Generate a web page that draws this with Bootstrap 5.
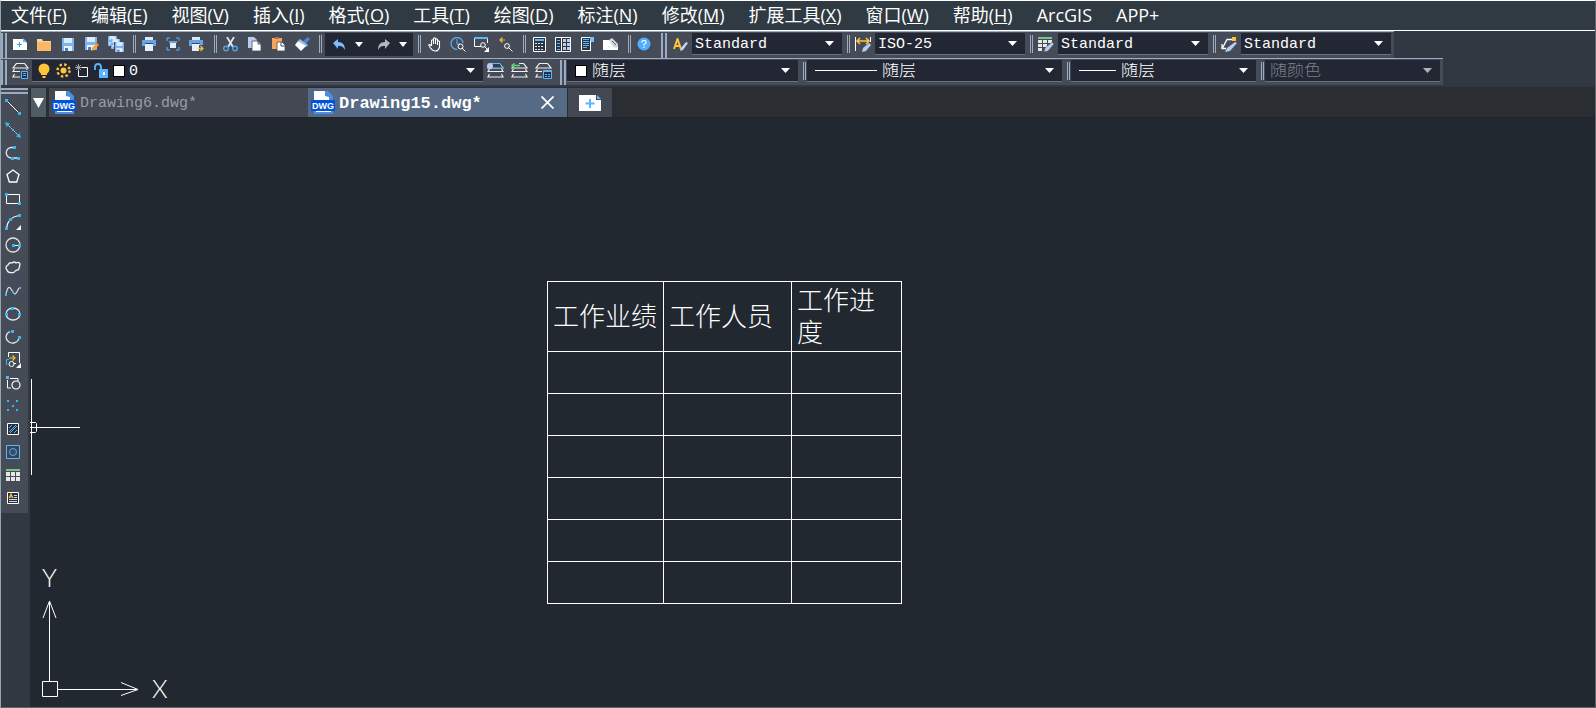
<!DOCTYPE html>
<html lang="zh-CN">
<head>
<meta charset="utf-8">
<meta name="viewport" content="width=device-width, initial-scale=1">
<title>Drawing15.dwg</title>
<link rel="stylesheet" href="https://cdn.jsdelivr.net/npm/bootstrap@5.3.0/dist/css/bootstrap.min.css">
<style>
  :root { --panel:#323842; --bar:#454c57; --well:#222733; --line:#9aabc2; --canvas:#222830; --cyan:#31b8f5; --blue:#5bb5ff; --gold:#ffc43a; }
  body { background:var(--canvas); color:#fff; font-family:"Open Sans","Noto Sans CJK SC",sans-serif; overflow:hidden; }
  .app-frame { border:1px solid #5c646c; border-left-color:#93a5ad; border-top-color:#fff; }
  .menu-bar { background:#2f3a42; border-bottom:1px solid #fff; height:30px; padding-left:10px; gap:24px; }
  .menu-bar .nav-link { color:#fff; padding:0; font-size:18px; line-height:29px; white-space:nowrap; }
  .dock { background:var(--panel); height:56px; }
  .tool-strip { background:var(--bar); border-top:1px solid var(--line); height:27px; padding:1px 3px 0 0; width:max-content; }
  .grip { width:6px; height:25px; border:solid var(--line); border-width:0 2px; margin-right:1px; flex:none; }
  .grip-mid { margin-left:5px; }
  .split { width:3px; height:18px; border:solid var(--line); border-width:0 1px; margin:2px 1px 0 5px; flex:none; }
  .tool { width:24px; height:22px; padding:0; border:0; display:flex; align-items:center; justify-content:center; flex:none; border-radius:0; }
  .tool svg, .well svg, .side svg { display:block; flex:none; }
  .tool-narrow { width:16px; }
  .well { background:var(--well); height:22px; border-bottom:1px solid #6c7380; flex:none; }
  .undo-well { background:var(--well); height:23px; padding:0 2px; margin-left:2px; }
  .well select { appearance:none; background:transparent url("data:image/svg+xml,%3Csvg xmlns='http://www.w3.org/2000/svg' width='9' height='5'%3E%3Cpath d='M0 0h9L4.500 5z' fill='%23fff'/%3E%3C/svg%3E") no-repeat right 8px center; border:0; color:#fff; height:21px; line-height:18px; padding:3px 24px 0 3px; font-family:"Liberation Mono","Noto Sans CJK SC",monospace; font-size:15px; outline:0; min-width:0; }
  .well select.han { font-size:17px; font-weight:300; padding-left:5px; }
  .well select:disabled { color:#7b818a; opacity:1; background-image:url("data:image/svg+xml,%3Csvg xmlns='http://www.w3.org/2000/svg' width='9' height='5'%3E%3Cpath d='M0 0h9L4.500 5z' fill='%23b0b4b8'/%3E%3C/svg%3E"); }
  .w-style { width:150px; } .w-layer { width:451px; padding-left:2px; } .w-color { width:231px; } .w-ltype { width:255px; } .w-weight { width:185px; } .w-plot { width:175px; }
  .swatch { width:12px; height:12px; background:#fff; border:1px solid #000; flex:none; }
  .rule-line { height:1px; background:#fff; flex:none; }
  .side-dock { background:var(--panel); width:29px; }
  .side { background:var(--bar); width:27px; margin-top:1px; padding-bottom:4px; }
  .side-grip { height:6px; border:solid var(--line); border-width:2px 0; margin-bottom:1px; }
  .side .tool { height:23px; width:24px; }
  .tab-strip { background:#2a2d31; height:31px; padding-top:1px; border-bottom:1px solid #20252b; }
  .doc-tab { background:#434852; color:#9a9da2; width:259px; height:29px; padding:0 9px 0 3px; font-family:"Liberation Mono",monospace; font-size:15px; line-height:26px; }
  .doc-tab.active { background:#566985; color:#fff; font-weight:700; font-size:17px; }
  .doc-name { padding-top:3px !important; }
  .plain { background:none; border:0; color:inherit; padding:0; font:inherit; display:flex; align-items:center; }
  .tab-list { background:#505c63; width:15px; height:29px; justify-content:center; margin:0 3px 0 1px; }
  .tab-new { background:#434852; width:44px; height:29px; justify-content:center; margin-left:1px; }
  .drawing { background:var(--canvas); }
  .sheet-table { position:absolute; left:517px; top:163px; width:355px; border-collapse:collapse; table-layout:fixed; font-family:"Noto Sans CJK SC",sans-serif; }
  .sheet-table th, .sheet-table td { border:1px solid #fff; height:42px; padding:0 4px 4px 5px; font-size:26px; line-height:32px; font-weight:300; color:#fff; }
  .sheet-table th { height:70px; }
  .c-a { width:116px; } .c-b { width:128px; }
  .crosshair { position:absolute; left:0; top:261px; }
  .ucs { position:absolute; left:10px; bottom:0; }
  .ucs text { font-family:Lato,sans-serif; font-weight:300; font-size:25px; fill:#fff; }
  .dwg-text { font-family:"Liberation Sans",sans-serif; font-weight:700; font-size:9px; fill:#fff; }
</style>
</head>
<body>
<svg width="0" height="0" class="position-absolute" aria-hidden="true">
  <symbol id="caret" viewBox="0 0 8 5"><path d="M0 0h8L4 5z" fill="#fff"/></symbol>
  <symbol id="floppy" viewBox="0 0 12 13"><path d="M0 0h12v13H0z" fill="#7db4ee"/><path d="M2 0h8v5H2z" fill="#dcecff"/><path d="M2 8h8v5H2z" fill="#e8f2ff"/><path d="M3 10h3v3H3z" fill="#4a7fc0"/></symbol>
  <symbol id="printer" viewBox="0 0 14 14"><path d="M3 0h8v3H3z" fill="#d9e8fa"/><path d="M0 3h14v6H0z" fill="#64a5ea"/><path d="M3 6h8v8H3z" fill="#e6f0fc"/><path d="M3 6h8v1H3z" fill="#3b4858"/></symbol>
  <symbol id="layers" viewBox="0 0 17 16"><path d="M4.500.5h8l3.500 4.500H1zM2.500 6L1 8.500h15L14.500 6M2.500 11L1 14h15l-1.500-3" fill="none" stroke="#f0f0f0" stroke-width="1.200"/></symbol>
  <symbol id="dwg" viewBox="0 0 24 25"><path d="M3 1h13l5 5v18H3z" fill="#fff"/><path d="M14 1h3l5 5v5h-4V7l-4-1z" fill="#4d8ee0"/><path d="M3 20h19v4H3z" fill="#4d8ee0"/><path d="M5 21h15v1H5z" fill="#fff"/><path d="M0 10h24v11H0z" fill="#0054dc"/></symbol>
</svg>

<div class="app-frame d-flex flex-column vh-100">
  <nav class="menu-bar d-flex" aria-label="菜单">
    <a class="nav-link" href="#">文件(<u>F</u>)</a><a class="nav-link" href="#">编辑(<u>E</u>)</a><a class="nav-link" href="#">视图(<u>V</u>)</a><a class="nav-link" href="#">插入(<u>I</u>)</a><a class="nav-link" href="#">格式(<u>O</u>)</a><a class="nav-link" href="#">工具(<u>T</u>)</a><a class="nav-link" href="#">绘图(<u>D</u>)</a><a class="nav-link" href="#">标注(<u>N</u>)</a><a class="nav-link" href="#">修改(<u>M</u>)</a><a class="nav-link" href="#">扩展工具(<u>X</u>)</a><a class="nav-link" href="#">窗口(<u>W</u>)</a><a class="nav-link" href="#">帮助(<u>H</u>)</a><a class="nav-link" href="#">ArcGIS</a><a class="nav-link" href="#">APP+</a>
  </nav>

  <div class="dock">
    <div class="tool-strip d-flex align-items-start">
      <span class="grip"></span>
      <button class="btn tool" aria-label="新建"><svg width="14" height="12"><path d="M0 1h10l4 4v7H0z" fill="#fff"/><path d="M10 0l4 4h-4z" fill="#6db7f5"/><path d="M6.500 4v5M4 6.500h5" stroke="#3a9cf0"/></svg></button>
      <button class="btn tool" aria-label="打开"><svg width="14" height="13"><path d="M0 1h5l1 2h8v10H0z" fill="#f0d9a0"/><path d="M0 4h14v9H0z" fill="#fdb766"/></svg></button>
      <button class="btn tool" aria-label="保存"><svg width="12" height="13"><use href="#floppy"/></svg></button>
      <button class="btn tool" aria-label="另存为"><svg width="14" height="15"><use href="#floppy" width="12" height="13"/><path d="M6 14l1-3 5-5 2 2-5 5z" fill="#f6a623"/><path d="M11 6l1-1 2 2-1 1z" fill="#e24b3b"/></svg></button>
      <button class="btn tool" aria-label="全部保存"><svg width="16" height="16"><use href="#floppy" width="9" height="10"/><path d="M3 3h10v10H3z" fill="#454c57"/><use href="#floppy" x="3" y="3" width="9" height="10"/><path d="M6 6h10v10H6z" fill="#454c57"/><use href="#floppy" x="7" y="6" width="9" height="10"/></svg></button>
      <span class="split"></span>
      <button class="btn tool" aria-label="打印"><svg width="14" height="14"><use href="#printer"/></svg></button>
      <button class="btn tool" aria-label="打印预览"><svg width="14" height="14"><path d="M1 4V1h3M10 1h3v3M1 10v3h3M10 13h3v-3" fill="none" stroke="#5bb5ff"/><path d="M3 4h8v2H3z" fill="#64a5ea"/><path d="M4 6h6v5H4z" fill="#e6f0fc"/></svg></button>
      <button class="btn tool" aria-label="输出"><svg width="16" height="15"><use href="#printer" width="14" height="14"/><path d="M10 8h6v7h-6z" fill="#454c57"/><path d="M9 11.500h5M11.500 9l2.500 2.500-2.500 2.500" fill="none" stroke="#f3bd3c" stroke-width="1.300"/></svg></button>
      <span class="split"></span>
      <button class="btn tool" aria-label="剪切"><svg width="15" height="15"><path d="M4 0l6 10M11 0L5 10" stroke="#dfe9f3" stroke-width="1.800"/><circle cx="3" cy="11.500" r="2.300" fill="none" stroke="#4da6e8" stroke-width="1.400"/><circle cx="12" cy="11.500" r="2.300" fill="none" stroke="#4da6e8" stroke-width="1.400"/></svg></button>
      <button class="btn tool" aria-label="复制"><svg width="13" height="14"><path d="M0 0h6l3 3v8H0z" fill="#b9cdea"/><path d="M4 4h6l3 3v7H4z" fill="#fff" stroke="#454c57" stroke-width=".8"/><path d="M10 4v3h3" fill="none" stroke="#454c57"/></svg></button>
      <button class="btn tool" aria-label="粘贴"><svg width="13" height="14"><path d="M0 1h10v11H0z" fill="#f5a65b"/><path d="M3 0h4v2H3z" fill="#c9683a"/><path d="M5 5h5l3 3v6H5z" fill="#fff" stroke="#454c57" stroke-width=".8"/><path d="M9 5v4h4" fill="none" stroke="#454c57"/></svg></button>
      <button class="btn tool" aria-label="特性匹配"><svg width="15" height="14"><path d="M8 4l5-4 2 2-4 5z" fill="#4e86c8"/><path d="M5 2l8 6-2 2-8-6z" fill="#8fbcf2"/><path d="M3 4l8 5-5 5-6-6z" fill="#fff"/></svg></button>
      <span class="split"></span>
      <div class="undo-well d-flex">
        <button class="btn tool" aria-label="放弃"><svg width="13" height="11"><path d="M0 4l5-4v3c5 0 7 3 7 8-2-4-4-4-7-4v3z" fill="#7dbcff"/></svg></button>
        <button class="btn tool tool-narrow me-1" aria-label="放弃列表"><svg width="8" height="5"><use href="#caret"/></svg></button>
        <button class="btn tool" aria-label="重做"><svg width="13" height="11"><path d="M13 4L8 0v3C3 3 1 6 1 11c2-4 4-4 7-4v3z" fill="#b5b7ba"/></svg></button>
        <button class="btn tool tool-narrow" aria-label="重做列表"><svg width="8" height="5"><use href="#caret"/></svg></button>
      </div>
      <span class="split"></span>
      <button class="btn tool" aria-label="平移"><svg width="13" height="15"><path d="M3.500 9V3.500q1-1.500 2 0V7 1.500q1-1.500 2 0V7 2.500q1-1.500 2 0V8 4.500q1-1.500 2 0V10q-1 4-4 4t-5-3L.7 8q.8-1.500 2.800 1" fill="none" stroke="#fff" stroke-width="1.100"/></svg></button>
      <button class="btn tool" aria-label="实时缩放"><svg width="16" height="15"><path d="M7 12.500A6 6 0 1 1 13 6" fill="none" stroke="#55a8e8" stroke-width="1.400"/><path d="M7 2v5h3" fill="none" stroke="#5bb5ff"/><circle cx="10.500" cy="9.500" r="2.500" fill="none" stroke="#fff"/><path d="M12 11l3.500 3.500" stroke="#fff"/></svg></button>
      <button class="btn tool" aria-label="窗口缩放"><svg width="16" height="15"><path d="M7 9.500H.5V1h13v5" fill="none" stroke="#fff"/><path d="M0 0h14v2H0z" fill="#5bb5ff"/><circle cx="9" cy="8" r="2.300" fill="none" stroke="#fff"/><path d="M10.500 9.500L14 13" stroke="#fff"/><path d="M15 10v5h-5z" fill="#fff"/></svg></button>
      <button class="btn tool" aria-label="缩放上一个"><svg width="14" height="15"><path d="M6 3H1M3.500.5L1 3l2.500 2.500" fill="none" stroke="#f3bd3c" stroke-width="1.200"/><circle cx="8" cy="9" r="2.400" fill="none" stroke="#fff"/><path d="M9.500 10.500L13.500 14.500" stroke="#fff"/></svg></button>
      <span class="split"></span>
      <button class="btn tool" aria-label="特性"><svg width="13" height="15"><path d="M.5.500h12v14H.5z" fill="#2c3440" stroke="#fff"/><path d="M2 2h9v2H2z" fill="#5bb5ff"/><path d="M2 6.500h9M2 9.500h9M2 12.500h9" stroke="#dfe9f3" stroke-dasharray="2 1"/></svg></button>
      <button class="btn tool" aria-label="设计中心"><svg width="16" height="15"><path d="M.5.500h15v14H.5zM6.500 0v15" fill="#2c3440" stroke="#fff"/><path d="M2 3.500h3M2 6.500h3M2 9.500h3M2 12.500h3" stroke="#5bb5ff"/><path d="M8 2h3v3H8zM12 2h3v3h-3zM8 6h3v3H8zM12 6h3v3h-3zM8 10h3v3H8zM12 10h3v3h-3z" fill="#b9cdea"/></svg></button>
      <button class="btn tool" aria-label="工具选项板"><svg width="13" height="14"><path d="M.5.500h9v13H.5z" fill="#2c3440" stroke="#fff"/><path d="M9 0h4v5H9z" fill="#7dbcff"/><path d="M9.500 4v10" stroke="#fff"/><path d="M2 2.500h6M2 4.500h6M2 6.500h6M2 8.500h6M2 10.500h4" stroke="#5bb5ff"/></svg></button>
      <button class="btn tool" aria-label="清理"><svg width="16" height="13"><path d="M0 2h8l7 6v4H0z" fill="#fff"/><path d="M6 2l3-2 6 6-1 4-4-1z" fill="#d2d8df"/><path d="M9 3l4 4" stroke="#59616c"/></svg></button>
      <span class="split"></span>
      <button class="btn tool" aria-label="帮助"><svg width="14" height="14"><circle cx="7" cy="7" r="6.500" fill="#4faeff"/><path d="M5 5.500q0-2 2-2t2 1.700Q9 6.500 7 7.500v1M7 9.500v1.500" fill="none" stroke="#fff" stroke-width="1.200"/></svg></button>

      <span class="grip grip-mid"></span>
      <button class="btn tool" aria-label="文字样式"><svg width="15" height="13"><path d="M1 11L4.500 1 8 11M2 8h5" fill="none" stroke="#ffc43a" stroke-width="2"/><path d="M7 13l1-3 5-6 2 1-5 7z" fill="#c3d7ef"/></svg></button>
      <div class="well w-style d-flex"><select class="flex-fill" aria-label="文字样式"><option>Standard</option></select></div>
      <span class="split"></span>
      <button class="btn tool" aria-label="标注样式"><svg width="16" height="15"><path d="M.5 0v14M15.500 0v5" stroke="#fff"/><path d="M2 4h12M5 1L2 4l3 3M11 1l3 3-3 3" fill="none" stroke="#ffc43a" stroke-width="1.500"/><path d="M7 15l1-4 6-5 2 2-5 6z" fill="#b4cdec"/></svg></button>
      <div class="well w-style d-flex"><select class="flex-fill" aria-label="标注样式"><option>ISO-25</option></select></div>
      <span class="split"></span>
      <button class="btn tool" aria-label="表格样式"><svg width="16" height="15"><path d="M0 0h14v2H0z" fill="#7bc48c"/><path d="M0 3h4v3H0zM5 3h4v3H5zM10 3h4v3h-4zM0 7h4v3H0zM5 7h4v3H5zM0 11h4v3H0z" fill="#e8e8e8"/><path d="M6 15l1-4 7-6 2 2-6 7z" fill="#b4cdec" stroke="#454c57" stroke-width=".5"/></svg></button>
      <div class="well w-style d-flex"><select class="flex-fill" aria-label="表格样式"><option>Standard</option></select></div>
      <span class="split"></span>
      <button class="btn tool" aria-label="多重引线样式"><svg width="16" height="15"><path d="M11 2.500H6L1.500 11M1 7v4.500h4" fill="none" stroke="#fff" stroke-width="1.300"/><path d="M11 0h4v4h-4z" fill="#ffc43a"/><path d="M4 15l2-4 8-6 2 1-7 8z" fill="#b4cdec"/></svg></button>
      <div class="well w-style d-flex"><select class="flex-fill" aria-label="多重引线样式"><option>Standard</option></select></div>
    </div>

    <div class="tool-strip d-flex align-items-start">
      <span class="grip"></span>
      <button class="btn tool" aria-label="图层特性"><svg width="17" height="17"><use href="#layers" width="17" height="16"/><path d="M8 7h9v10H8z" fill="#454c57"/><path d="M9.500 8.500h6v7h-6z" fill="#25303f" stroke="#5bb5ff"/><path d="M11 10.500h3M11 12.500h3" stroke="#5bb5ff"/></svg></button>
      <div class="well w-layer d-flex align-items-center">
        <svg width="14" height="15" class="ms-1"><circle cx="6" cy="6" r="5.500" fill="#ffc43a"/><path d="M3 9h6v3H3zM4.500 13h3v2h-3z" fill="#ffc43a"/></svg>
        <svg width="15" height="15" class="ms-1"><circle cx="7.500" cy="7.500" r="3" fill="#ffc43a"/><circle cx="7.500" cy="7.500" r="6" fill="none" stroke="#ffc43a" stroke-width="2.400" stroke-dasharray="2.400 2.310"/></svg>
        <svg width="15" height="14" class="ms-1"><path d="M3.500 6v6.500h9v-9H7" fill="none" stroke="#fff"/><path d="M3.500 0v7M0 3.500h7M1 1l5 5M6 1L1 6" stroke="#b8bcc2" stroke-width=".8"/></svg>
        <svg width="15" height="15" class="ms-1"><path d="M1 7V3.500Q1.500 1 4 1t3 2.500V7" fill="none" stroke="#5bb5ff" stroke-width="1.800"/><path d="M5 6h9v9H5z" fill="#5bb5ff"/><path d="M9 9h2v3H9z" fill="#fff"/></svg>
        <span class="swatch ms-1"></span>
        <select class="flex-fill ms-1 ps-0" aria-label="图层"><option>0</option></select>
      </div>
      <button class="btn tool" aria-label="置为当前图层"><svg width="17" height="16"><use href="#layers"/><path d="M4 .5h9l2.500 4.500H2z" fill="#2f3d4f" stroke="#5bb5ff"/><circle cx="3" cy="3" r="3" fill="#b9cdea"/></svg></button>
      <button class="btn tool" aria-label="上一个图层"><svg width="17" height="16"><use href="#layers"/><path d="M0 0h8v4H0z" fill="#454c57"/><path d="M9 2.500H1M3.500.5L1 2.500 3.500 5" fill="none" stroke="#5fd27a" stroke-width="1.500"/></svg></button>
      <button class="btn tool" aria-label="图层状态"><svg width="17" height="16"><use href="#layers"/><path d="M7 6h10v10H7z" fill="#454c57"/><path d="M8.500 7.500h8v8h-8z" fill="#25303f" stroke="#5bb5ff"/><path d="M8 7h9v2H8z" fill="#5bb5ff"/><path d="M10 11.500h2M13 11.500h2M10 13.500h2M13 13.500h2" stroke="#5bb5ff"/></svg></button>

      <span class="grip grip-mid"></span>
      <div class="well w-color d-flex align-items-center"><span class="swatch ms-2"></span><select class="han flex-fill" aria-label="颜色"><option>随层</option></select></div>
      <span class="split"></span>
      <div class="well w-ltype d-flex align-items-center"><span class="rule-line ms-2" style="width:62px"></span><select class="han flex-fill" aria-label="线型"><option>随层</option></select></div>
      <span class="split"></span>
      <div class="well w-weight d-flex align-items-center"><span class="rule-line ms-2" style="width:37px"></span><select class="han flex-fill" aria-label="线宽"><option>随层</option></select></div>
      <span class="split"></span>
      <div class="well w-plot d-flex align-items-center"><select class="han flex-fill" aria-label="打印样式" disabled><option>随颜色</option></select></div>
    </div>
  </div>

  <div class="d-flex flex-fill">
    <aside class="side-dock">
      <div class="side">
        <div class="side-grip"></div>
        <button class="btn tool" aria-label="直线"><svg width="16" height="16"><path d="M2 2l12 12" stroke="#fff"/><path d="M0 0h3v3H0zM13 13h3v3h-3z" fill="#31b8f5"/></svg></button>
        <button class="btn tool" aria-label="构造线"><svg width="16" height="16"><path d="M2 2l12 12" stroke="#dfe9f3" stroke-dasharray="2 1"/><path d="M0 0l5 1.500L1.500 5zM16 16l-5-1.500 3.500-3.500zM7 7h2v2H7z" fill="#31b8f5"/></svg></button>
        <button class="btn tool" aria-label="多段线"><svg width="16" height="14"><path d="M9 1.500H6.500a5 5 0 0 0 0 10.500H13" fill="none" stroke="#e4e8ec" stroke-width="1.300"/><path d="M8 0h3v3H8zM6 11h3v3H6zM12 11h3v3h-3z" fill="#31b8f5"/></svg></button>
        <button class="btn tool" aria-label="正多边形"><svg width="14" height="14"><path d="M7 1l6 4.500L10.700 13H3.300L1 5.500z" fill="none" stroke="#fff" stroke-width="1.300"/></svg></button>
        <button class="btn tool" aria-label="矩形"><svg width="16" height="12"><path d="M1.500 1.500h13v9h-13z" fill="none" stroke="#fff"/><path d="M0 0h3v3H0zM13 9h3v3h-3z" fill="#31b8f5"/></svg></button>
        <button class="btn tool" aria-label="圆弧"><svg width="16" height="16"><path d="M1.500 14Q3 3 14 1.500" fill="none" stroke="#fff" stroke-width="1.200"/><path d="M0 13h3v3H0zM4 4h3v3H4zM13 0h3v3h-3z" fill="#31b8f5"/><path d="M16 11v5h-5z" fill="#fff"/></svg></button>
        <button class="btn tool" aria-label="圆"><svg width="16" height="16"><circle cx="8" cy="8" r="7" fill="none" stroke="#dfe3e8" stroke-width="1.300"/><path d="M8 8.500h6" stroke="#fff"/><path d="M7 7h3v3H7zM13 7h3v3h-3z" fill="#31b8f5"/></svg></button>
        <button class="btn tool" aria-label="修订云线"><svg width="16" height="13"><path d="M2 9Q-.5 6 3 4q1-3 4-2 2-2 4 0 3-1.500 4 1-.5 2-.7 3.500-.3 3-3.500 3-2 3-5 2Q3 12 2 9z" fill="none" stroke="#f0f2f4" stroke-width="1.300"/></svg></button>
        <button class="btn tool" aria-label="样条曲线"><svg width="16" height="10"><path d="M1 8.500Q3-2 6 3t4 5 4-6" fill="none" stroke="#dfe3e8" stroke-width="1.200"/><path d="M0 7h2v3H0zM7 5h2v2H7zM14 1h2v2h-2z" fill="#31b8f5"/></svg></button>
        <button class="btn tool" aria-label="椭圆"><svg width="16" height="14"><ellipse cx="8" cy="7" rx="7" ry="6" fill="none" stroke="#e4e8ec" stroke-width="1.300"/><path d="M6 0h3v3H6zM0 6h3v3H0zM13 6h3v3h-3z" fill="#31b8f5"/></svg></button>
        <button class="btn tool" aria-label="椭圆弧"><svg width="16" height="14"><path d="M5 1.500A6.500 6 0 1 0 14 8" fill="none" stroke="#e4e8ec" stroke-width="1.300"/><path d="M6 0h3v3H6zM13 6h3v3h-3z" fill="#31b8f5"/></svg></button>
        <button class="btn tool" aria-label="插入块"><svg width="16" height="16"><path d="M3.500 5V.5h11V11" fill="none" stroke="#fff"/><path d="M4 6h6M7.500 3.500L10 6 7.500 8.500" fill="none" stroke="#f3bd3c" stroke-width="1.200"/><path d="M1.500 13V7.500H4" fill="none" stroke="#31b8f5"/><circle cx="6.500" cy="12" r="2.500" fill="none" stroke="#fff"/><path d="M9 11.500h2" stroke="#fff"/><path d="M16 11v5h-5z" fill="#fff"/></svg></button>
        <button class="btn tool" aria-label="创建块"><svg width="15" height="14"><path d="M4 2.500h8V5M1.500 4v8H5" fill="none" stroke="#fff"/><path d="M0 0h3v3H0z" fill="#5bb5ff"/><circle cx="10" cy="9" r="4" fill="#454c57" stroke="#fff" stroke-width="1.200"/></svg></button>
        <button class="btn tool" aria-label="点"><svg width="12" height="12"><path d="M0 0h2v2H0zM9 0h2v2H9zM5 5h2v2H5zM0 9h2v2H0zM9 9h2v2H9z" fill="#31b8f5"/></svg></button>
        <button class="btn tool" aria-label="图案填充"><svg width="12" height="12"><path d="M.5.500h11v11H.5z" fill="#27303c" stroke="#fff"/><path d="M2 5l3-3M2 9l7-7M3 10l7-7M7 10l3-3" stroke="#5bb5ff"/></svg></button>
        <button class="btn tool" aria-label="面域"><svg width="14" height="14"><path d="M.5.500h13v13H.5z" fill="#394452" stroke="#5bb5ff"/><circle cx="7" cy="7" r="3.500" fill="#3e4a5a" stroke="#4faeff"/></svg></button>
        <button class="btn tool" aria-label="表格"><svg width="14" height="12"><path d="M0 0h14v2H0z" fill="#7bc48c"/><path d="M0 3h4v4H0zM5 3h4v4H5zM10 3h4v4h-4zM0 8h4v4H0zM5 8h4v4H5zM10 8h4v4h-4z" fill="#e8e8e8"/></svg></button>
        <button class="btn tool" aria-label="多行文字"><svg width="12" height="12"><path d="M.5.500h11v11H.5z" fill="#27303c" stroke="#fff"/><path d="M2 6l2-4 2 4M3 5h2" fill="none" stroke="#ffc43a" stroke-width="1.200"/><path d="M7 3.500h3M7 5.500h3M2 7.500h8M2 9.500h8" stroke="#c3d7ef"/></svg></button>
      </div>
    </aside>

    <main class="d-flex flex-column flex-fill">
      <div class="tab-strip d-flex">
        <button class="plain tab-list" aria-label="文档列表"><svg width="11" height="10"><path d="M0 0h11L5.500 10z" fill="#fff"/></svg></button>
        <div class="doc-tab d-flex align-items-center"><svg width="24" height="25" aria-hidden="true"><use href="#dwg"/><text x="1" y="19" class="dwg-text">DWG</text></svg><button class="plain doc-name ms-1">Drawing6.dwg*</button></div>
        <div class="doc-tab active d-flex align-items-center"><svg width="24" height="25" aria-hidden="true"><use href="#dwg"/><text x="1" y="19" class="dwg-text">DWG</text></svg><button class="plain doc-name ms-1">Drawing15.dwg*</button><button class="plain ms-auto me-1" aria-label="关闭"><svg width="13" height="13"><path d="M.5.500l12 12M12.500.5l-12 12" stroke="#fff" stroke-width="1.800"/></svg></button></div>
        <button class="plain tab-new" aria-label="新建文档"><svg width="22" height="16"><path d="M0 0h17v5h5v11H0z" fill="#fff"/><path d="M18 0l4 4h-4z" fill="#6db7f5"/><path d="M11 4v9M6.500 8.500h9" stroke="#5bb5ff" stroke-width="2"/></svg></button>
      </div>
      <div class="drawing position-relative flex-fill">
        <table class="sheet-table">
          <colgroup><col class="c-a"><col class="c-b"><col></colgroup>
          <thead><tr><th>工作业绩</th><th>工作人员</th><th>工作进度</th></tr></thead>
          <tbody>
            <tr><td></td><td></td><td></td></tr><tr><td></td><td></td><td></td></tr><tr><td></td><td></td><td></td></tr>
            <tr><td></td><td></td><td></td></tr><tr><td></td><td></td><td></td></tr><tr><td></td><td></td><td></td></tr>
          </tbody>
        </table>
        <svg class="crosshair" width="52" height="97" aria-hidden="true"><path d="M1.500 0v96M7 48.500h43M0 43.500h5.500l1 1v8l-1 1H0M0 48.500h6" fill="none" stroke="#fff"/></svg>
        <svg class="ucs" width="134" height="150" viewBox="0 -10 134 150"><path d="M2.500 114.500h15v15h-15zM9.500 114V34M3 51l6.500-17L16 51M18 122.500h80M81 115.500l17 7-17 6" fill="none" stroke="#fff"/><text x="2" y="20">Y</text><text x="112" y="131">X</text></svg>
      </div>
    </main>
  </div>
</div>
<script src="https://cdn.jsdelivr.net/npm/bootstrap@5.3.0/dist/js/bootstrap.bundle.min.js"></script>
</body>
</html>
